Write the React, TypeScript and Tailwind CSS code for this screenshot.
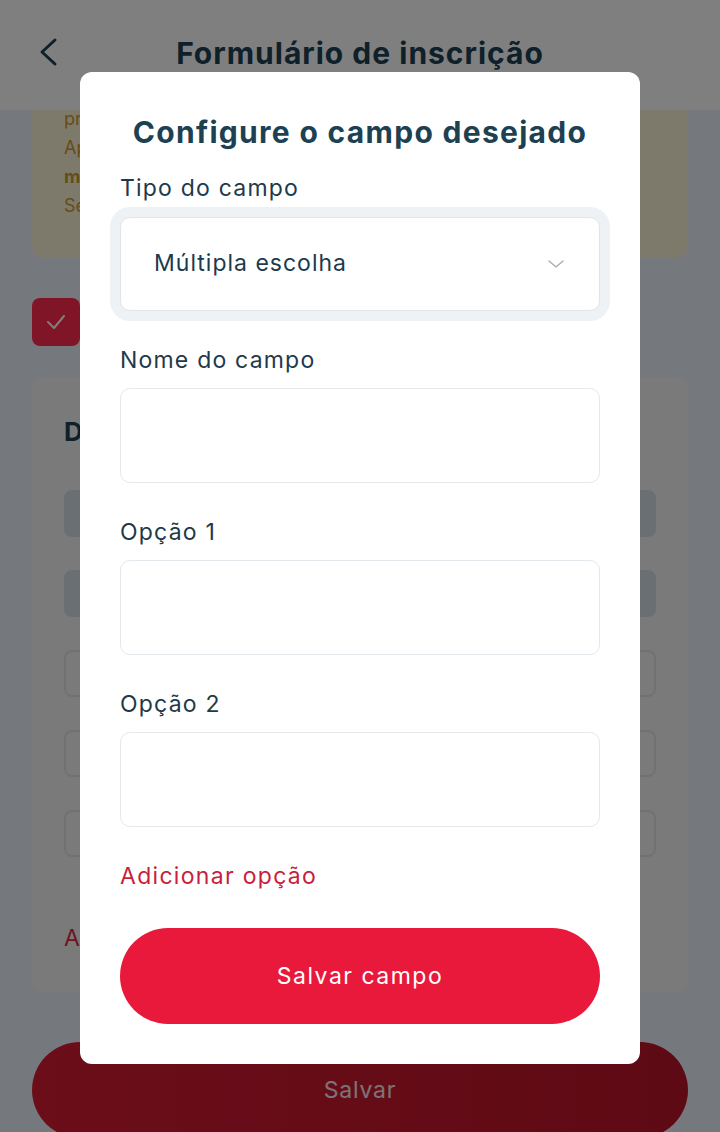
import React from 'react';

const fields = ['Nome do campo', 'Opção 1', 'Opção 2'];

function BackgroundPage() {
  return (
    <div className="flex flex-col">
      {/* Header */}
      <header className="h-[110px] bg-white flex items-start pt-[34px] px-[38px] relative">
        <svg width="20" height="30" viewBox="0 0 20 30" className="mt-[3px]">
          <polyline points="17,3 4,15 17,27" fill="none" stroke="#1d4152" strokeWidth="3" strokeLinecap="round" strokeLinejoin="round" />
        </svg>
        <h1 className="flex-1 text-center pr-[20px] text-[30px] leading-[38px] font-bold text-[#1d4152] tracking-[1px]">
          Formulário de inscrição
        </h1>
      </header>

      <div className="px-[32px] flex flex-col">
        {/* Notice, mostly hidden behind the modal */}
        <div className="h-[148px] rounded-b-[12px] bg-[#fcf4d6] px-[32px] overflow-hidden">
          <div className="-mt-[6px] w-[16px] overflow-hidden text-[18px] leading-[29px] text-[#c99a2e] whitespace-nowrap">
            <p>pr</p>
            <p>Ap</p>
            <p className="font-bold">m</p>
            <p>Se</p>
          </div>
        </div>

        {/* Checkbox row */}
        <div className="mt-[40px] flex items-center">
          <div className="w-[48px] h-[48px] rounded-[8px] bg-[#ff2a4c] flex items-center justify-center">
            <svg width="24" height="24" viewBox="0 0 24 24">
              <polyline points="4,12 10,18 20,6" fill="none" stroke="#ffffff" strokeWidth="2" strokeLinecap="round" strokeLinejoin="round" />
            </svg>
          </div>
        </div>

        {/* Fields card */}
        <div className="mt-[32px] rounded-[12px] bg-[#f4f4f4] px-[32px] pt-[38px] pb-[38px] flex flex-col">
          <h2 className="w-[16px] overflow-hidden text-[26px] leading-[32px] font-bold text-[#1d4152]">D</h2>
          <div className="mt-[42px] flex flex-col gap-[33px]">
            <div className="h-[47px] rounded-[8px] bg-[#d4dee8]" />
            <div className="h-[47px] rounded-[8px] bg-[#d4dee8]" />
            <div className="h-[47px] rounded-[8px] border-2 border-[#dfe5ea]" />
            <div className="h-[47px] rounded-[8px] border-2 border-[#dfe5ea]" />
            <div className="h-[47px] rounded-[8px] border-2 border-[#dfe5ea]" />
          </div>
          <span className="mt-[65px] w-[16px] overflow-hidden text-[23px] leading-[32px] text-[#dc2a40]">A</span>
        </div>

        {/* Save */}
        <button className="mt-[50px] h-[96px] rounded-full bg-gradient-to-r from-[#d81c34] to-[#bc1428] text-[23px] tracking-[0.8px] text-white/90">
          Salvar
        </button>
      </div>
    </div>
  );
}

function FieldModal() {
  return (
    <div className="absolute left-[80px] top-[72px] w-[560px] rounded-[12px] bg-white px-[40px] pt-[41px] pb-[40px] flex flex-col">
      <h2 className="text-center text-[30px] leading-[38px] font-bold text-[#1d4152] tracking-[1.3px]">
        Configure o campo desejado
      </h2>

      <label className="mt-[21px] text-[23px] leading-[32px] text-[#1e3a4a] tracking-[1.2px]">Tipo do campo</label>
      <div className="mt-[13px] h-[94px] rounded-[10px] border-[1.5px] border-[#dfe5e9] ring-[10px] ring-[#eff2f4] bg-white flex items-center justify-between pl-[33px] pr-[34px]">
        <span className="-mt-[2px] text-[23px] text-[#1d3b4c] tracking-[1px]">Múltipla escolha</span>
        <svg width="18" height="10" viewBox="0 0 18 10">
          <polyline points="2,2 9,8 16,2" fill="none" stroke="#a9b0b6" strokeWidth="1.5" strokeLinecap="round" strokeLinejoin="round" />
        </svg>
      </div>

      {fields.map((f) => (
        <div key={f} className="mt-[33px] flex flex-col">
          <label className="text-[23px] leading-[32px] text-[#1e3a4a] tracking-[1.2px]">{f}</label>
          <div className="mt-[12px] h-[95px] rounded-[10px] border-[1.5px] border-[#e2e8ec] bg-white" />
        </div>
      ))}

      <span className="mt-[33px] text-[23px] leading-[32px] text-[#c81e3c] tracking-[1.3px]">Adicionar opção</span>

      <button className="mt-[36px] h-[96px] rounded-full bg-[#e8193a] text-white text-[23px] tracking-[1.5px]">
        Salvar campo
      </button>
    </div>
  );
}

export default function App() {
  return (
    <div className="relative w-[720px] h-[1132px] overflow-hidden bg-[#ebf3fb] font-['Inter',sans-serif]">
      <BackgroundPage />
      <div className="absolute inset-0 bg-black/50" />
      <FieldModal />
    </div>
  );
}
